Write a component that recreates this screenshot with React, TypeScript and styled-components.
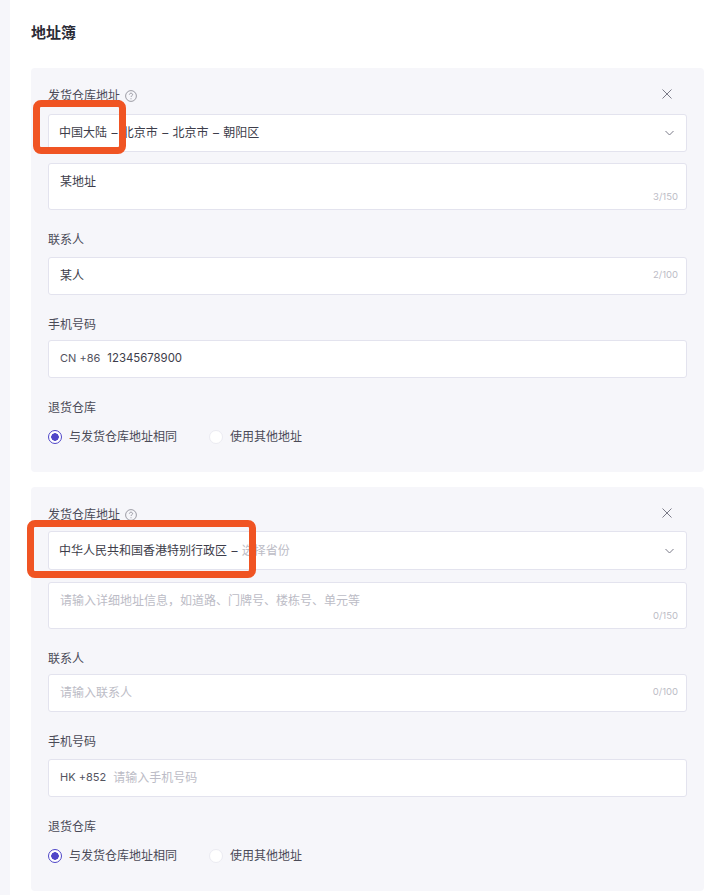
import React from "react"
import styled, { createGlobalStyle } from "styled-components"

const GlobalStyle = createGlobalStyle`
  html, body {
    margin: 0;
    padding: 0;
    background: #fff;
  }
  body {
    font-family: Inter, "Noto Sans CJK SC", sans-serif;
    color: #3d3d4a;
  }
`

const CloseIcon = () => (
  <svg width="10" height="10" viewBox="0 0 10 10" fill="none">
    <path d="M.5.5l9 9M9.500.5l-9 9" stroke="#7b7b88" strokeWidth="1" />
  </svg>
)

const ChevronIcon = () => (
  <svg width="9" height="6" viewBox="0 0 9 6" fill="none">
    <path d="M.5 1L4.500 5l4-4" stroke="#7b7b88" strokeWidth="1" />
  </svg>
)

const HelpIcon = () => (
  <svg width="12" height="12" viewBox="0 0 12 12" fill="none">
    <circle cx="6" cy="6" r="5.400" stroke="#85858f" strokeWidth=".8" />
    <path
      d="M4.400 4.700c0-.9.700-1.500 1.600-1.500s1.600.6 1.600 1.400c0 1.200-1.600 1.200-1.600 2.400"
      stroke="#85858f"
      strokeWidth=".8"
    />
    <circle cx="6" cy="8.700" r=".5" fill="#85858f" />
  </svg>
)

interface IPanelData {
  selectText: string
  selectPlaceholder?: string
  address?: string
  addressCount: string
  contact?: string
  contactCount: string
  dial: string
  phone?: string
  headGap: number
  selectHeight: number
  selectGap: number
  contactGap: number
  phoneGap: number
  highlightWidth: number
  highlightHeight: number
  highlightLeft: number
  highlightTop: number
}

const panels: IPanelData[] = [
  {
    selectText: "中国大陆 – 北京市 – 北京市 – 朝阳区",
    address: "某地址",
    addressCount: "3/150",
    contact: "某人",
    contactCount: "2/100",
    dial: "CN +86",
    phone: "12345678900",
    headGap: 8,
    selectHeight: 38,
    selectGap: 11,
    contactGap: 7,
    phoneGap: 5,
    highlightLeft: 2,
    highlightTop: 32,
    highlightWidth: 93,
    highlightHeight: 54,
  },
  {
    selectText: "中华人民共和国香港特别行政区 – ",
    selectPlaceholder: "选择省份",
    addressCount: "0/150",
    contactCount: "0/100",
    dial: "HK +852",
    headGap: 6,
    selectHeight: 39,
    selectGap: 12,
    contactGap: 5,
    phoneGap: 7,
    highlightLeft: -4,
    highlightTop: 33,
    highlightWidth: 229,
    highlightHeight: 58,
  },
]

const AddressPanel: React.FC<{ data: IPanelData }> = ({ data }) => (
  <Panel>
    <Highlight
      $left={data.highlightLeft}
      $top={data.highlightTop}
      $width={data.highlightWidth}
      $height={data.highlightHeight}
    />
    <HeadRow $gap={data.headGap}>
      <Label>发货仓库地址</Label>
      <HelpIcon />
      <CloseButton>
        <CloseIcon />
      </CloseButton>
    </HeadRow>
    <SelectBox $height={data.selectHeight} $gap={data.selectGap}>
      <span>
        {data.selectText}
        {data.selectPlaceholder && <Placeholder>{data.selectPlaceholder}</Placeholder>}
      </span>
      <ChevronIcon />
    </SelectBox>
    <TextArea>
      {data.address ?? <Placeholder>请输入详细地址信息，如道路、门牌号、楼栋号、单元等</Placeholder>}
      <AreaCount>{data.addressCount}</AreaCount>
    </TextArea>
    <FieldLabel $gap={data.contactGap}>联系人</FieldLabel>
    <InputBox>
      <span>{data.contact ?? <Placeholder>请输入联系人</Placeholder>}</span>
      <Count>{data.contactCount}</Count>
    </InputBox>
    <FieldLabel $gap={data.phoneGap}>手机号码</FieldLabel>
    <InputBox $start>
      <Dial>{data.dial}</Dial>
      {data.phone ? <Phone>{data.phone}</Phone> : <Placeholder>请输入手机号码</Placeholder>}
    </InputBox>
    <FieldLabel $gap={9}>退货仓库</FieldLabel>
    <RadioRow>
      <RadioItem>
        <Radio $checked />
        与发货仓库地址相同
      </RadioItem>
      <RadioItem>
        <Radio />
        使用其他地址
      </RadioItem>
    </RadioRow>
  </Panel>
)

export default function App() {
  return (
    <>
      <GlobalStyle />
      <Page>
        <Content>
          <Title>地址簿</Title>
          {panels.map((panel) => (
            <AddressPanel key={panel.dial} data={panel} />
          ))}
        </Content>
      </Page>
    </>
  )
}

const Page = styled.div`
  width: 720px;
  height: 895px;
  overflow: hidden;
  background: #f6f6fa;
  padding-left: 10px;
  box-sizing: border-box;
`

const Content = styled.div`
  height: 100%;
  background: #fff;
  padding: 23px 16px 0 21px;
  box-sizing: border-box;
`

const Title = styled.h1`
  margin: 0 0 25px;
  font-size: 15px;
  line-height: 20px;
  font-weight: 600;
  color: #2b2b36;
`

const Panel = styled.section`
  position: relative;
  height: 404px;
  margin-bottom: 15px;
  padding: 18px 17px 0;
  box-sizing: border-box;
  background: #f6f6fa;
  border-radius: 4px;
`

const Highlight = styled.div<{ $left: number; $top: number; $width: number; $height: number }>`
  position: absolute;
  left: ${(p) => p.$left}px;
  top: ${(p) => p.$top}px;
  width: ${(p) => p.$width}px;
  height: ${(p) => p.$height}px;
  box-sizing: border-box;
  border: 7px solid #f05423;
  border-radius: 8px;
  z-index: 1;
`

const HeadRow = styled.div<{ $gap: number }>`
  display: flex;
  align-items: center;
  gap: 5px;
  height: 20px;
  margin-bottom: ${(p) => p.$gap}px;
`

const Label = styled.span`
  font-size: 12px;
  line-height: 20px;
  color: #4a4a57;
`

const CloseButton = styled.span`
  margin-left: auto;
  margin-right: 15px;
  margin-top: -4px;
  display: flex;
`

const SelectBox = styled.div<{ $height: number; $gap: number }>`
  height: ${(p) => p.$height}px;
  margin-bottom: ${(p) => p.$gap}px;
  padding: 0 12px 3px 10px;
  display: flex;
  align-items: center;
  justify-content: space-between;
  box-sizing: border-box;
  background: #fff;
  border: 1px solid #e3e3ee;
  border-radius: 3px;
  font-size: 12px;
  word-spacing: 1px;
  color: #3d3d4a;

  svg {
    margin-top: 3px;
  }
`

const Placeholder = styled.span`
  color: #bcbcc6;
  word-spacing: 0;
`

const TextArea = styled.div`
  position: relative;
  height: 47px;
  padding: 9px 11px;
  box-sizing: border-box;
  background: #fff;
  border: 1px solid #e3e3ee;
  border-radius: 3px;
  font-size: 12px;
  line-height: 17px;
  color: #3d3d4a;
`

const AreaCount = styled.span`
  position: absolute;
  right: 8px;
  bottom: 6px;
  font-size: 9.500px;
  line-height: 13px;
  color: #bcbcc6;
`

const FieldLabel = styled.div<{ $gap: number }>`
  margin: 20px 0 ${(p) => p.$gap}px;
  height: 20px;
  font-size: 12px;
  line-height: 20px;
  color: #4a4a57;
`

const InputBox = styled.div<{ $start?: boolean }>`
  height: 38px;
  padding: 0 8px 3px 11px;
  display: flex;
  align-items: center;
  justify-content: ${(p) => (p.$start ? "flex-start" : "space-between")};
  box-sizing: border-box;
  background: #fff;
  border: 1px solid #e3e3ee;
  border-radius: 3px;
  font-size: 12px;
  color: #3d3d4a;
`

const Count = styled.span`
  font-size: 9.500px;
  color: #bcbcc6;
`

const Dial = styled.span`
  font-size: 11px;
  color: #54545f;
  margin-right: 7px;
`

const Phone = styled.span`
  font-size: 11.400px;
`

const RadioRow = styled.div`
  display: flex;
  align-items: center;
  gap: 32px;
`

const RadioItem = styled.label`
  display: flex;
  align-items: center;
  gap: 7px;
  font-size: 12px;
  line-height: 20px;
  color: #4a4a57;
`

const Radio = styled.span<{ $checked?: boolean }>`
  width: 14px;
  height: 14px;
  box-sizing: border-box;
  border-radius: 50%;
  border: 1px solid ${(p) => (p.$checked ? "#4f46c8" : "#ebebf2")};
  background: ${(p) => (p.$checked ? "radial-gradient(circle, #4f46c8 0 3.500px, #fff 4px)" : "#fff")};
`
